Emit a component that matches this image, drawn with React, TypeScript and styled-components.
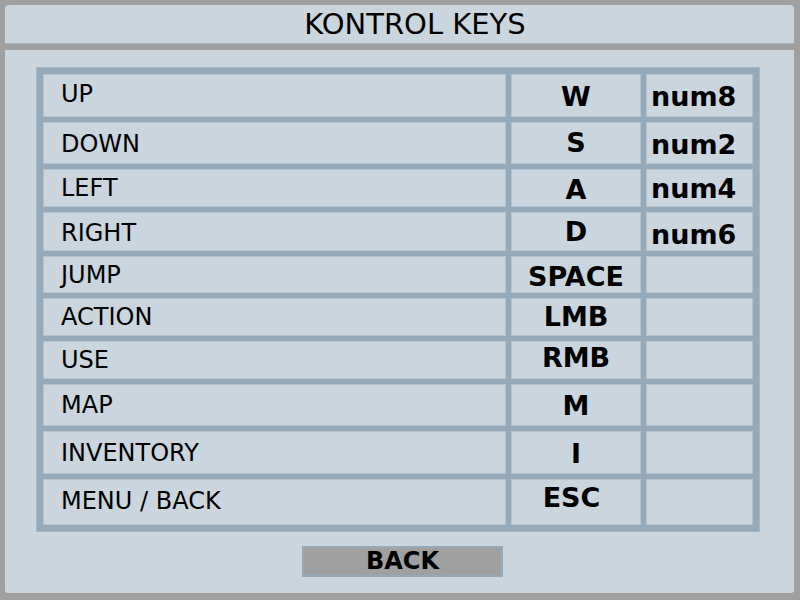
import React from "react";
import styled, { createGlobalStyle } from "styled-components";

const Global = createGlobalStyle`
  html, body {
    margin: 0;
    padding: 0;
    background: #a0a0a0;
  }
  body {
    font-family: "DejaVu Sans", Verdana, sans-serif;
    color: #000;
  }
`;

const Screen = styled.div`
  width: 800px;
  height: 600px;
  box-sizing: border-box;
  padding: 5px 6px 7px 5px;
  display: flex;
  flex-direction: column;
  gap: 6px;
  background: #a0a0a0;
`;

const Header = styled.header`
  height: 39px;
  box-sizing: border-box;
  background: #cbd5de;
  border-bottom: 1px solid #a4b5c3;
  border-radius: 4px 4px 0 0;
  display: flex;
  justify-content: center;
  padding-left: 31px;
`;

const Title = styled.h1`
  margin: 0;
  font-family: "DejaVu Sans", sans-serif;
  font-weight: normal;
  font-size: 29px;
  line-height: 38px;
  letter-spacing: 0;
`;

const Panel = styled.main`
  flex: 1;
  background: #cbd5de;
  border-radius: 0 0 3px 3px;
  padding: 17px 0 0 31px;
  display: flex;
  flex-direction: column;
`;

const Table = styled.div`
  align-self: flex-start;
  background: #94a9b9;
  border: 1px solid #a6b6c3;
  padding: 6px;
  display: flex;
  flex-direction: column;
  gap: 5px;
`;

const Row = styled.div<{ $h: number }>`
  display: grid;
  grid-template-columns: 463px 130px 107px;
  column-gap: 5px;
  height: ${(p) => p.$h}px;
`;

const Cell = styled.div<{ $pt: number }>`
  background: #cad5de;
  box-shadow: inset 0 0 0 1px #b3c2ce;
  box-sizing: border-box;
  padding-top: ${(p) => p.$pt}px;
  overflow: hidden;
  white-space: nowrap;
`;

const LabelCell = styled(Cell)`
  padding-left: 18px;
  font-size: 24px;
  line-height: 28px;
`;

const KeyCell = styled(Cell)<{ $shift: number }>`
  text-align: center;
  padding-right: ${(p) => p.$shift}px;
  font-weight: bold;
  font-size: 27px;
  line-height: 31px;
`;

const AltCell = styled(Cell)`
  padding-left: 5px;
  font-weight: bold;
  font-size: 27px;
  line-height: 31px;
`;

const Footer = styled.div`
  display: flex;
  justify-content: center;
  padding: 14px 31px 0 6px;
`;

const BackButton = styled.button`
  width: 201px;
  height: 31px;
  box-sizing: border-box;
  background: #a0a0a0;
  border: 2px solid #94a9b9;
  border-radius: 0;
  padding: 0;
  margin: 0;
  font-family: "DejaVu Sans", sans-serif;
  font-weight: bold;
  font-size: 24px;
  line-height: 27px;
  color: #000;
  cursor: pointer;
`;

type Binding = {
  label: string;
  key: string;
  alt?: string;
  h: number;
  lp: number;
  kp: number;
  ap?: number;
  shift?: number;
};

const bindings: Binding[] = [
  { label: "UP", key: "W", alt: "num8", h: 43, lp: 6, kp: 7, ap: 7 },
  { label: "DOWN", key: "S", alt: "num2", h: 42, lp: 8, kp: 5, ap: 6.5 },
  { label: "LEFT", key: "A", alt: "num4", h: 38, lp: 4.5, kp: 5, ap: 4 },
  { label: "RIGHT", key: "D", alt: "num6", h: 39, lp: 6.5, kp: 4, ap: 7 },
  { label: "JUMP", key: "SPACE", h: 37, lp: 4.5, kp: 5 },
  { label: "ACTION", key: "LMB", h: 38, lp: 4.5, kp: 3 },
  { label: "USE", key: "RMB", h: 38, lp: 4.5, kp: 1 },
  { label: "MAP", key: "M", h: 42, lp: 6.5, kp: 6 },
  { label: "INVENTORY", key: "I", h: 43, lp: 7.5, kp: 7 },
  { label: "MENU / BACK", key: "ESC", h: 46, lp: 7.5, kp: 3.3, shift: 9 },
];

export default function App() {
  return (
    <>
      <Global />
      <Screen>
        <Header>
          <Title>KONTROL KEYS</Title>
        </Header>
        <Panel>
          <Table>
            {bindings.map((b) => (
              <Row key={b.label} $h={b.h}>
                <LabelCell $pt={b.lp}>{b.label}</LabelCell>
                <KeyCell $pt={b.kp} $shift={b.shift ?? 0}>
                  {b.key}
                </KeyCell>
                <AltCell $pt={b.ap ?? 0}>{b.alt ?? ""}</AltCell>
              </Row>
            ))}
          </Table>
          <Footer>
            <BackButton>BACK</BackButton>
          </Footer>
        </Panel>
      </Screen>
    </>
  );
}
